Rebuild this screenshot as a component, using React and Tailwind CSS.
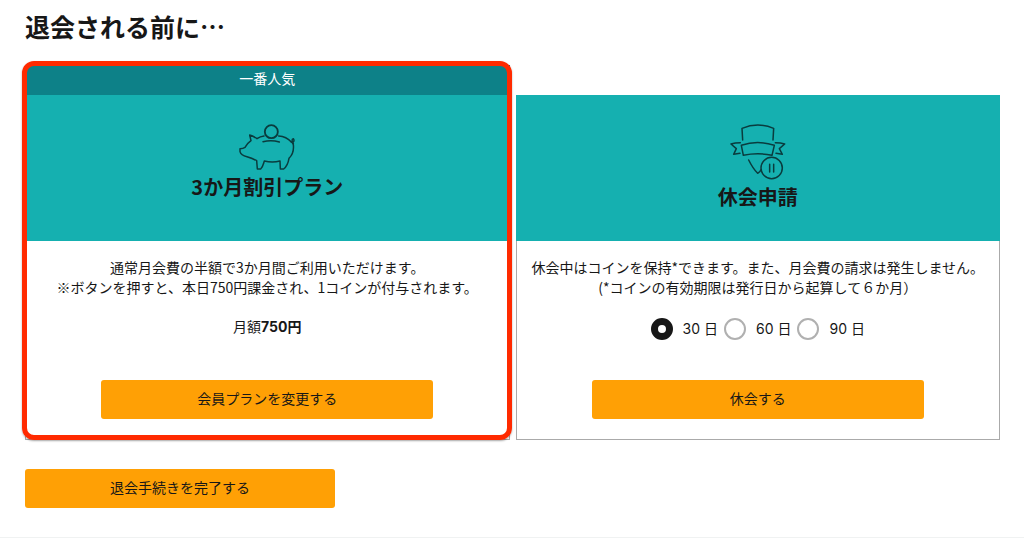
import React, { useState } from "react";

const PiggyBankIcon = () => (
  <svg
    viewBox="238 43 168 138"
    className="w-14 h-[46px]"
    fill="none"
    stroke="#0a3c3e"
    strokeWidth="4.5"
    strokeLinecap="round"
    strokeLinejoin="round"
    aria-hidden="true"
  >
    <circle cx="335" cy="66" r="19.5" strokeWidth="5.5" />
    <path d="M313 79 C305 80 298 83 292 87 C285 82 278 78 270 76 L274 93 C267 98 260 105 256 113 C252 116 246 117 241 117 L241 126 C243 134 252 139 262 141 C272 144 284 149 291 153 L293 178 L303 178 C310 172 311 162 314 154 C329 158 347 158 361 154 L362 178 L372 178 C382 170 386 158 388 146 C397 137 403 122 401 105 C400 102 398 99 395 97 C386 87 371 80 357 79" />
    <path d="M310 96 C326 92 343 92 359 97" />
    <path d="M395 97 C402 99 405 93 401 87 C396 88 396 94 401 101" />
  </svg>
);

const RibbonPauseIcon = () => (
  <svg
    viewBox="211 42 168 168"
    className="size-14"
    fill="none"
    stroke="#0a3c3e"
    strokeWidth="4.5"
    strokeLinecap="round"
    strokeLinejoin="round"
    aria-hidden="true"
  >
    <path d="M249 90 L247 55 C278 42 311 42 342 55 L340 90" />
    <path d="M245 106 C277 95 311 95 344 106 L337 136 C309 130 280 130 251 136 Z" />
    <path d="M242 98 C233 98 223 99 214 102 L230 116 L222 133 L241 130" />
    <path d="M347 98 C356 98 366 99 375 102 L359 116 L368 133 L349 130" />
    <path d="M267 150 C274 164 282 178 294 190 C299 187 302 184 304 179" />
    <circle cx="336" cy="174" r="32" />
    <path d="M330 163 V186 M342 163 V186" />
  </svg>
);

const PlanHeader = ({ icon, title }) => (
  <div className="h-[146px] pt-[29px] bg-[#15b0b0] flex flex-col items-center gap-[5px]">
    {icon}
    <h2 className="text-[20px] leading-6 font-bold">{title}</h2>
  </div>
);

const ActionButton = ({ className, children }) => (
  <button
    type="button"
    className={`h-[39px] pb-1 rounded-[3px] bg-[#ffa005] hover:bg-[#f09400] cursor-pointer ${className}`}
  >
    {children}
  </button>
);

const App = () => {
  const [days, setDays] = useState(30);

  return (
    <main
      lang="ja"
      className="pt-2.5 pl-[25px] pr-6 bg-white text-[#171717] text-[14px] leading-5 font-['Noto_Sans_CJK_JP',sans-serif]"
    >
      <h1 className="text-[25px] leading-8 font-bold">退会される前に…</h1>

      <div className="mt-[23px] grid grid-cols-2 gap-1.5 items-end">
        {/* Discount plan */}
        <section className="relative">
          <p className="h-[30px] pt-[3px] bg-[#0d8188] text-white text-center">一番人気</p>
          <PlanHeader icon={<PiggyBankIcon />} title="3か月割引プラン" />
          <div className="pt-4 pb-5 border border-t-0 border-[#aaaaaa] flex flex-col items-center text-center">
            <p>
              通常月会費の半額で3か月間ご利用いただけます。
              <br />
              ※ボタンを押すと、本日750円課金され、1コインが付与されます。
            </p>
            <p className="mt-5 h-6 font-[Inter,'Noto_Sans_CJK_JP',sans-serif]">
              月額<strong>750円</strong>
            </p>
            <ActionButton className="mt-[39px] w-[332px]">会員プランを変更する</ActionButton>
          </div>
          {/* Highlight frame */}
          <div className="absolute -left-[3px] -right-0.5 -top-1 bottom-0 border-5 border-[#ff2a00] rounded-xl shadow-[0_1px_2px_rgba(0,0,0,0.35)] pointer-events-none" />
        </section>

        {/* Pause membership */}
        <section>
          <PlanHeader icon={<RibbonPauseIcon />} title="休会申請" />
          <div className="pt-4 pb-5 border border-t-0 border-[#aaaaaa] flex flex-col items-center text-center">
            <p>
              休会中はコインを保持*できます。また、月会費の請求は発生しません。
              <br />
              (*コインの有効期限は発行日から起算して６か月）
            </p>
            <div className="mt-5 h-6 flex items-center gap-1.5 font-[Inter,'Noto_Sans_CJK_JP',sans-serif]">
              {[30, 60, 90].map((d) => (
                <label key={d} className="flex items-center gap-2.5">
                  <input
                    type="radio"
                    name="days"
                    value={d}
                    checked={days === d}
                    onChange={() => setDays(d)}
                    className="appearance-none size-[22px] rounded-full bg-white border-2 border-[#b0b0b0] checked:border-7 checked:border-[#171717]"
                  />
                  {d} 日
                </label>
              ))}
            </div>
            <ActionButton className="mt-[39px] w-[332px]">休会する</ActionButton>
          </div>
        </section>
      </div>

      <ActionButton className="mt-[29px] w-[310px]">退会手続きを完了する</ActionButton>
      <hr className="mt-[29px] -ml-[25px] -mr-6 border-[#f0f2f2]" />
    </main>
  );
};

export default App;
